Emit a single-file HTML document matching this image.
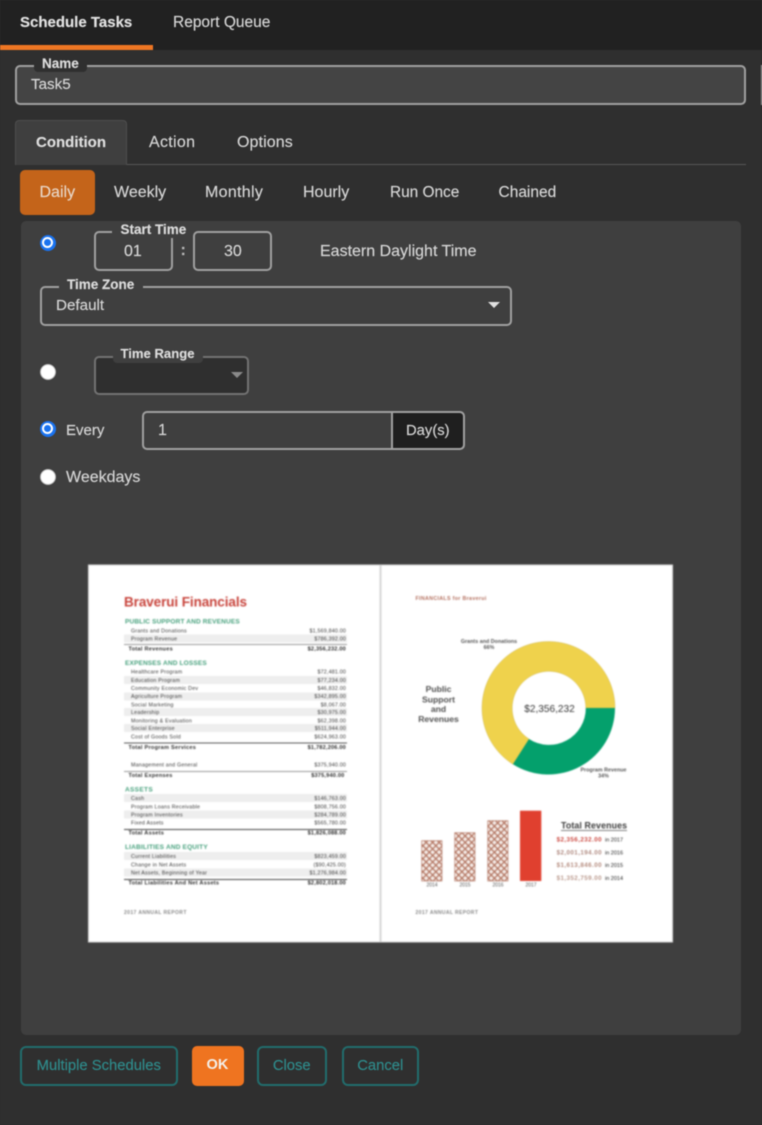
<!DOCTYPE html>
<html lang="en">
<head>
<meta charset="utf-8">
<title>Schedule Tasks</title>
<style>
html,body{margin:0;padding:0;background:#2f2f2f}
#app{position:relative;width:762px;height:1125px;overflow:hidden;background:#2f2f2f;font-family:"Liberation Sans",sans-serif;font-size:16px;color:#d6d6d6;filter:blur(.4px)}
#app div,#app span{position:absolute;box-sizing:border-box}
.t{white-space:nowrap;line-height:20px;height:20px;-webkit-text-stroke:.15px currentColor}
.b{font-weight:700}
.lab{font-size:13.5px;font-weight:700;color:#dcdcdc}
.box{border:2px solid #a0a0a0;border-radius:5px}
.notch{background:#3f3f3f;border-radius:0 0 4px 4px}
.btn{border:2px solid #226c6c;border-radius:6px;color:#2f8c8c;text-align:center;line-height:37px;font-size:14.8px;-webkit-text-stroke:.15px currentColor}
.radio{width:16px;height:16px;border-radius:50%;background:#fff;border:1px solid #bbb}
.on{background:#1a73f0;border:1.5px solid #1a73f0}
.on::after{content:"";position:absolute;left:1px;top:1px;width:11px;height:11px;box-sizing:border-box;border:2px solid #fff;border-radius:50%}
.caret{width:0;height:0;border-left:6.5px solid transparent;border-right:6.5px solid transparent;border-top:6.5px solid #e0e0e0}
svg text{font-family:"Liberation Sans",sans-serif}
</style>
</head>
<body>
<div id="app">
  <div style="left:0;top:0;width:762px;height:50px;background:#212121"></div>
  <div style="left:0;top:44.5px;width:153px;height:5px;background:#ee7623"></div>
  <span class="t b" style="left:20px;top:13px;color:#e2e2e2;font-size:15px">Schedule Tasks</span>
  <span class="t" style="left:173px;top:13px;font-size:15.5px">Report Queue</span>

  <div class="box" style="left:15px;top:64.5px;width:731px;height:40px;background:#444"></div>
  <div style="left:34px;top:60px;width:53px;height:12px;background:#2f2f2f;border-radius:0 0 4px 4px"></div>
  <span class="t lab" style="left:42px;top:54px">Name</span>
  <span class="t" style="left:31px;top:75px;font-size:15.2px">Task5</span>
  <div style="left:761px;top:64.5px;width:1px;height:40px;background:#aaa"></div>

  <div style="left:15px;top:164px;width:731px;height:1px;background:#565656"></div>
  <div style="left:15px;top:119.5px;width:112px;height:45px;background:#3f3f3f;border:1px solid #4e4e4e;border-bottom:0;border-radius:4px 4px 0 0"></div>
  <span class="t b" style="left:36px;top:133px;font-size:15px;color:#dedede">Condition</span>
  <span class="t" style="left:149px;top:133px;letter-spacing:.3px">Action</span>
  <span class="t" style="left:237px;top:133px;letter-spacing:.1px">Options</span>

  <div style="left:20px;top:170px;width:74.5px;height:45px;background:#c4641a;border-radius:5px"></div>
  <span class="t" style="left:39.5px;top:183px;color:#e8d6c6">Daily</span>
  <span class="t" style="left:114px;top:183px">Weekly</span>
  <span class="t" style="left:205px;top:183px;letter-spacing:.3px">Monthly</span>
  <span class="t" style="left:303px;top:183px">Hourly</span>
  <span class="t" style="left:390px;top:183px;font-size:15.4px">Run Once</span>
  <span class="t" style="left:498.5px;top:183px;font-size:15.5px">Chained</span>

  <div style="left:20.5px;top:221px;width:720.5px;height:814px;background:#3f3f3f;border-radius:5px"></div>

  <div class="radio on" style="left:39.5px;top:235px"></div>
  <div class="box" style="left:93.5px;top:231px;width:79px;height:40px"></div>
  <div class="box" style="left:193px;top:231px;width:79px;height:40px"></div>
  <div class="notch" style="left:112px;top:225px;width:80px;height:13px"></div>
  <span class="t lab" style="left:120.5px;top:220px">Start Time</span>
  <span class="t" style="left:124px;top:242px">01</span>
  <span class="t" style="left:224px;top:242px">30</span>
  <span class="t b" style="left:180.5px;top:241px;color:#bbb">:</span>
  <span class="t" style="left:320px;top:242px">Eastern Daylight Time</span>

  <div class="box" style="left:40px;top:286px;width:472px;height:40px"></div>
  <div class="notch" style="left:59px;top:280px;width:84px;height:12px"></div>
  <span class="t lab" style="left:67px;top:275px">Time Zone</span>
  <span class="t" style="left:56px;top:296px;font-size:15.2px">Default</span>
  <div class="caret" style="left:488px;top:302px"></div>

  <div class="radio" style="left:39.5px;top:364px"></div>
  <div class="box" style="left:93.5px;top:355.5px;width:155px;height:39.5px;background:#2f2f2f;border-color:#727272"></div>
  <div class="notch" style="left:113px;top:350px;width:90px;height:13px"></div>
  <span class="t lab" style="left:120.5px;top:344px;font-size:13.1px">Time Range</span>
  <div class="caret" style="left:230.5px;top:372px;border-top-color:#8a8a8a"></div>

  <div class="radio on" style="left:39.5px;top:421px"></div>
  <span class="t" style="left:66px;top:421px;font-size:15px">Every</span>
  <div class="box" style="left:142px;top:411px;width:322.5px;height:39px"></div>
  <div style="left:390.5px;top:413px;width:72px;height:35px;background:#1f1f1f;border-left:2px solid #a0a0a0;border-radius:0 4px 4px 0"></div>
  <span class="t" style="left:158px;top:421px">1</span>
  <span class="t" style="left:406px;top:421px;font-size:14.8px">Day(s)</span>

  <div class="radio" style="left:39.5px;top:469px"></div>
  <span class="t" style="left:66px;top:468px">Weekdays</span>

  <svg style="position:absolute;left:0;top:0;filter:blur(.45px)" width="762" height="1125" viewBox="0 0 762 1125">
    <defs>
      <pattern id="p" width="4.6" height="4.6" patternUnits="userSpaceOnUse" patternTransform="rotate(45 0 0)">
        <rect width="4.6" height="4.6" fill="#b0705c"/>
        <rect x=".6" y=".6" width="3.4" height="3.4" fill="#f6eeea"/>
      </pattern>
    </defs>
    <rect x="88" y="564.5" width="585" height="378" fill="#d8d8d8"/>
    <rect x="89" y="565.5" width="583" height="376" fill="#fff"/>
    <rect x="379.5" y="565.5" width="2" height="376" fill="#d6d6d6"/>

    <text x="124" y="606.5" font-size="13.5" font-weight="700" fill="#c8443c" textLength="123">Braverui Financials</text>

    <g font-size="6.5" font-weight="700" fill="#47a17d" letter-spacing=".35">
      <text x="125" y="623.5" textLength="115">PUBLIC SUPPORT AND REVENUES</text>
      <text x="125" y="665" textLength="82">EXPENSES AND LOSSES</text>
      <text x="125" y="791.5" textLength="28">ASSETS</text>
      <text x="125" y="849" textLength="83">LIABILITIES AND EQUITY</text>
    </g>

    <g fill="#eeeeee">
      <rect x="124" y="634.5" width="223" height="8"/>
      <rect x="124" y="676" width="223" height="8"/>
      <rect x="124" y="692.5" width="223" height="8"/>
      <rect x="124" y="708" width="223" height="8"/>
      <rect x="124" y="724" width="223" height="8"/>
      <rect x="124" y="794" width="223" height="8"/>
      <rect x="124" y="810.5" width="223" height="8"/>
      <rect x="124" y="852" width="223" height="8"/>
      <rect x="124" y="868.5" width="223" height="8"/>
    </g>

    <g stroke-width="1">
      <line x1="124" x2="347" y1="644.5" y2="644.5" stroke="#999"/>
      <line x1="124" x2="347" y1="743" y2="743" stroke="#555"/>
      <line x1="124" x2="347" y1="771.5" y2="771.5" stroke="#999"/>
      <line x1="124" x2="347" y1="829.5" y2="829.5" stroke="#444"/>
      <line x1="124" x2="347" y1="879.5" y2="879.5" stroke="#444"/>
    </g>

    <g font-size="5.3" fill="#3a3a3a" letter-spacing=".22">
      <text x="131" y="632.5">Grants and Donations</text>
      <text x="131" y="640.5">Program Revenue</text>
      <text x="131" y="673.5">Healthcare Program</text>
      <text x="131" y="682">Education Program</text>
      <text x="131" y="690">Community Economic Dev</text>
      <text x="131" y="698">Agriculture Program</text>
      <text x="131" y="706.5">Social Marketing</text>
      <text x="131" y="714">Leadership</text>
      <text x="131" y="722.5">Monitoring &amp; Evaluation</text>
      <text x="131" y="730">Social Enterprise</text>
      <text x="131" y="738.5">Cost of Goods Sold</text>
      <text x="131" y="766.5">Management and General</text>
      <text x="131" y="800">Cash</text>
      <text x="131" y="808.5">Program Loans Receivable</text>
      <text x="131" y="816.5">Program Inventories</text>
      <text x="131" y="824.5">Fixed Assets</text>
      <text x="131" y="858">Current Liabilities</text>
      <text x="131" y="866.5">Change in Net Assets</text>
      <text x="131" y="874.5">Net Assets, Beginning of Year</text>
    </g>
    <g font-size="5.3" fill="#3a3a3a" letter-spacing=".2" text-anchor="end">
      <text x="346" y="632.5">$1,569,840.00</text>
      <text x="346" y="640.5">$786,392.00</text>
      <text x="346" y="673.5">$72,481.00</text>
      <text x="346" y="682">$77,234.00</text>
      <text x="346" y="690">$46,832.00</text>
      <text x="346" y="698">$342,895.00</text>
      <text x="346" y="706.5">$8,067.00</text>
      <text x="346" y="714">$30,975.00</text>
      <text x="346" y="722.5">$62,398.00</text>
      <text x="346" y="730">$511,944.00</text>
      <text x="346" y="738.5">$624,963.00</text>
      <text x="346" y="766.5">$375,940.00</text>
      <text x="346" y="800">$146,763.00</text>
      <text x="346" y="808.5">$808,756.00</text>
      <text x="346" y="816.5">$284,789.00</text>
      <text x="346" y="824.5">$565,780.00</text>
      <text x="346" y="858">$823,459.00</text>
      <text x="346" y="866.5">($90,425.00)</text>
      <text x="346" y="874.5">$1,276,984.00</text>
    </g>
    <g font-size="5.6" font-weight="700" fill="#2f2f2f" letter-spacing=".25">
      <text x="128.5" y="650.5">Total Revenues</text>
      <text x="128.5" y="749">Total Program Services</text>
      <text x="128.5" y="777">Total Expenses</text>
      <text x="128.5" y="834.5">Total Assets</text>
      <text x="128.5" y="884.5">Total Liabilities And Net Assets</text>
    </g>
    <g font-size="5.6" font-weight="700" fill="#2f2f2f" letter-spacing=".2" text-anchor="end">
      <text x="346" y="650.5">$2,356,232.00</text>
      <text x="346" y="749">$1,782,206.00</text>
      <text x="344.5" y="777">$375,940.00</text>
      <text x="346" y="834.5">$1,826,088.00</text>
      <text x="346" y="884.5">$2,802,018.00</text>
    </g>
    <text x="124" y="914" font-size="5" font-weight="700" fill="#888" letter-spacing=".4">2017 ANNUAL REPORT</text>

    <text x="415.5" y="600" font-size="5.3" font-weight="700" fill="#b4705f" letter-spacing=".2" textLength="71">FINANCIALS for Braverui</text>

    <path d="M615 708A66.5 66.5 0 1 0 512.9 764.2L529 739A36.8 36.8 0 1 1 585.8 708Z" fill="#efd24c" stroke="#c9b040" stroke-width=".4"/>
    <path d="M615 708A66.5 66.5 0 0 1 512.9 764.2L529 739A36.8 36.8 0 0 0 585.8 708Z" fill="#04a06c"/>

    <g font-size="5.3" font-weight="700" fill="#555" text-anchor="middle" letter-spacing=".05">
      <text x="489" y="643">Grants and Donations</text>
      <text x="489" y="649">66%</text>
      <text x="603.5" y="771.5">Program Revenue</text>
      <text x="603.5" y="777.5">34%</text>
    </g>
    <g font-size="8.6" font-weight="700" fill="#505050" text-anchor="middle">
      <text x="438.5" y="692">Public</text>
      <text x="438.5" y="702.5">Support</text>
      <text x="438.5" y="712">and</text>
      <text x="438.5" y="722">Revenues</text>
    </g>
    <text x="549.5" y="712" font-size="10.1" fill="#333" text-anchor="middle">$2,356,232</text>

    <rect x="421.7" y="840.7" width="20.3" height="40.3" fill="url(#p)" stroke="#b0705c" stroke-width=".6"/>
    <rect x="454.7" y="832.7" width="20.3" height="48.3" fill="url(#p)" stroke="#b0705c" stroke-width=".6"/>
    <rect x="487.7" y="820.7" width="20.3" height="60.3" fill="url(#p)" stroke="#b0705c" stroke-width=".6"/>
    <rect x="520" y="810.7" width="21.3" height="70.3" fill="#e0402f"/>
    <g font-size="5" fill="#555" text-anchor="middle">
      <text x="432" y="886.5">2014</text>
      <text x="465" y="886.5">2015</text>
      <text x="498" y="886.5">2016</text>
      <text x="531" y="886.5">2017</text>
    </g>

    <text x="561" y="828.5" font-size="8.8" font-weight="700" fill="#3a3a3a" textLength="66">Total Revenues</text>
    <line x1="561" x2="627" y1="830.5" y2="830.5" stroke="#555" stroke-width=".8"/>
    <g font-size="6.2" font-weight="700" text-anchor="end" letter-spacing=".45">
      <text x="602" y="841.5" fill="#cc4a42">$2,356,232.00</text>
      <text x="602" y="854.5" fill="#b08a80">$2,001,194.00</text>
      <text x="602" y="867" fill="#b48a7c">$1,613,846.00</text>
      <text x="602" y="880" fill="#bb9a8e">$1,352,759.00</text>
    </g>
    <g font-size="5.5" fill="#222">
      <text x="605" y="841.5">in 2017</text>
      <text x="605" y="854.5">in 2016</text>
      <text x="605" y="867">in 2015</text>
      <text x="605" y="880">in 2014</text>
    </g>
    <text x="415.5" y="914" font-size="5" font-weight="700" fill="#888" letter-spacing=".4">2017 ANNUAL REPORT</text>
  </svg>

  <div class="btn" style="left:20px;top:1046px;width:157.5px;height:39.5px">Multiple Schedules</div>
  <div style="left:191.5px;top:1046px;width:52px;height:39.5px;background:#ef7420;border-radius:5px;color:#f4efe9;font-weight:700;text-align:center;line-height:39px;font-size:14.6px">OK</div>
  <div class="btn" style="left:257px;top:1046px;width:69.5px;height:39.5px">Close</div>
  <div class="btn" style="left:342px;top:1046px;width:76.5px;height:39.5px">Cancel</div>
</div>
</body>
</html>
